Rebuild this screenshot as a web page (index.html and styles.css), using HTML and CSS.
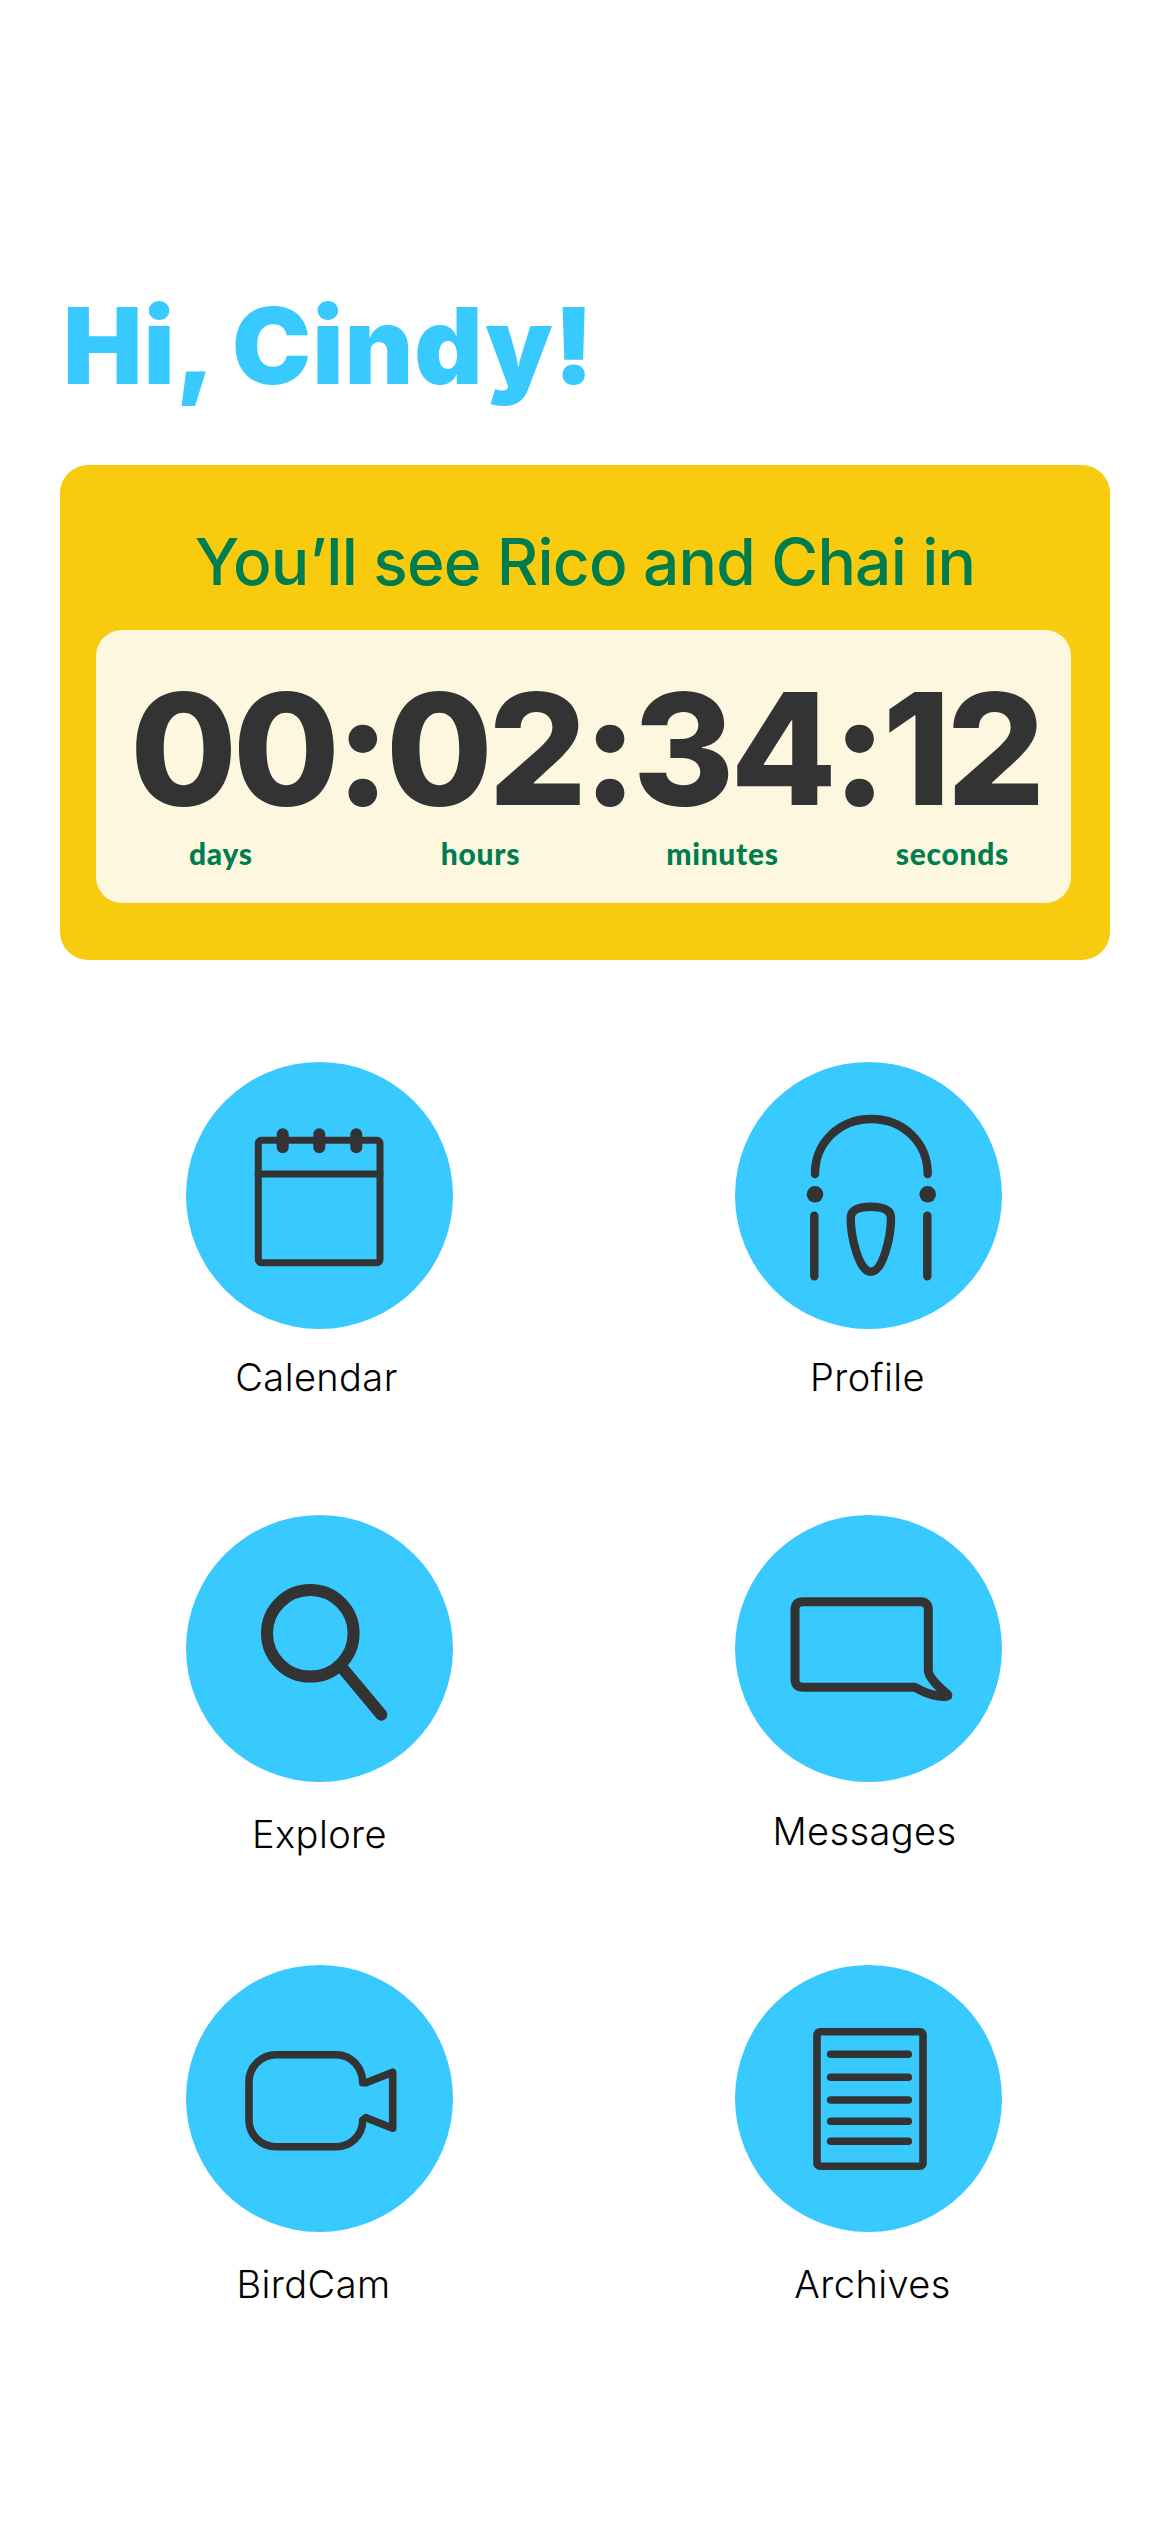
FILE: index.html
```html
<!DOCTYPE html>
<html lang="en">
<head>
<meta charset="utf-8">
<title>Hi, Cindy!</title>
<link rel="stylesheet" href="styles.css">
</head>
<body>
<main class="page">
  <h1 class="greeting">Hi, Cindy!</h1>
  <section class="card">
    <h2 class="card-title">You’ll see Rico and Chai in</h2>
    <div class="timer">
      <div class="digits">00:02:34:12</div>
      <div class="units">
        <span class="unit unit-days">days</span>
        <span class="unit unit-hours">hours</span>
        <span class="unit unit-minutes">minutes</span>
        <span class="unit unit-seconds">seconds</span>
      </div>
    </div>
  </section>
  <nav class="menu">
    <a class="item item-calendar">
      <span class="disc"><svg class="icon" viewBox="0 0 267 267"><rect x="72.3" y="78.3" width="121.7" height="122.4" rx="3"/><path d="M72 112H194"/><path class="thick" d="M96.7 72.3V85.3M133.3 72.3V85.3M170.3 72.3V85.3"/></svg></span>
      <span class="label">Calendar</span>
    </a>
    <a class="item item-profile">
      <span class="disc"><svg class="icon icon-profile" viewBox="0 0 267 267"><path d="M80 112C80 80 105 57 136.3 57S192.7 80 192.7 112"/><circle class="dot" cx="80" cy="132.3" r="8.3"/><circle class="dot" cx="192.7" cy="132.3" r="8.3"/><path d="M79.3 153.7V214.3M192.3 153.7V214.3"/><path d="M135.7 144.7C148 144.7 156 148 156 156C156 175 148 209.7 135.7 209.7C124 209.7 115.7 175 115.7 156C115.7 148 124 144.7 135.7 144.7Z"/></svg></span>
      <span class="label">Profile</span>
    </a>
    <a class="item item-explore">
      <span class="disc"><svg class="icon icon-bold" viewBox="0 0 267 267"><circle cx="124.3" cy="118.3" r="43.3"/><path d="M158 155L195.3 199.7"/></svg></span>
      <span class="label">Explore</span>
    </a>
    <a class="item item-messages">
      <span class="disc"><svg class="icon icon-msg" viewBox="0 0 267 267"><path d="M68 86.7H185.3Q193.3 86.7 193.3 94.7V155C193.3 163 205 173 212 179C214 181 212 181.5 210 181.5C200 181.5 190 178 180 172.3H68Q60 172.3 60 164.3V94.7Q60 86.7 68 86.7Z"/></svg></span>
      <span class="label">Messages</span>
    </a>
    <a class="item item-birdcam">
      <span class="disc"><svg class="icon icon-cam" viewBox="0 0 267 267"><path d="M90 89.7H150C165 89.7 176.7 102 176.7 117.7L180 117.7L206.7 107.3V163.3L180 152.7L176.7 155C176.7 170 165 181.7 150 181.7H90C75 181.7 63 170 63 155V116.7C63 102 75 89.7 90 89.7Z"/></svg></span>
      <span class="label">BirdCam</span>
    </a>
    <a class="item item-archives">
      <span class="disc"><svg class="icon icon-cam" viewBox="0 0 267 267"><rect x="82" y="66.7" width="106" height="134.6" rx="3"/><path d="M95.7 89.3H173.3M95.7 112.3H173.3M95.7 135H173.3M95.7 156.3H173.3M95.7 176.3H173.3"/></svg></span>
      <span class="label">Archives</span>
    </a>
  </nav>
</main>
</body>
</html>
```

FILE: styles.css
```css
* { box-sizing: border-box; }
html, body { margin: 0; background: #fff; }
.page { width: 1170px; height: 2532px; padding-top: 281px; overflow: hidden; }
.greeting {
  margin: 0 0 0 63px;
  font: 900 106px/130px Inter, sans-serif;
  letter-spacing: 0.9px;
  color: #38c9ff;
}
.card {
  width: 1050px;
  height: 495px;
  margin: 54px 0 0 60px;
  padding: 57px 36px 0;
  background: #f9cb0f;
  border-radius: 28px;
}
.card-title {
  margin: 0;
  height: 108px;
  font: 500 64px/80px Inter, sans-serif;
  letter-spacing: -0.8px;
  text-align: center;
  color: #007d4f;
}
.timer {
  width: 975px;
  height: 273px;
  padding: 59px 0 0 34px;
  background: #fef7e0;
  border-radius: 26px;
}
.digits {
  font: 800 155px/120px Inter, sans-serif;
  letter-spacing: -4.5px;
  color: #333;
  white-space: nowrap;
}
.units { display: flex; margin-top: 26px; padding-left: 59px; }
.unit { font: 900 30px/36px Lato, sans-serif; letter-spacing: 0.7px; color: #007d4f; }
.unit-hours { margin-left: 188px; }
.unit-minutes { margin-left: 146px; }
.unit-seconds { margin-left: 117px; }
.menu {
  display: grid;
  grid-template-columns: 267px 267px;
  column-gap: 282px;
  grid-auto-rows: 453px;
  margin: 102px 0 0 186px;
}
.item { display: flex; flex-direction: column; align-items: center; }
.disc { display: block; width: 267px; height: 267px; border-radius: 50%; background: #38c9ff; }
.icon { display: block; width: 267px; height: 267px; fill: none; stroke: #333; stroke-width: 7; stroke-linecap: round; stroke-linejoin: round; }
.thick { stroke-width: 12; }
.dot { fill: #333; stroke: none; }
.icon-bold { stroke-width: 12; }
.icon-msg { stroke-width: 9; }
.icon-profile { stroke-width: 8.4; }
.icon-cam { stroke-width: 7.6; }
.label { margin-top: 25px; font: 300 38px/46px Inter, sans-serif; letter-spacing: 0.4px; color: #000; white-space: nowrap; }
.item-calendar .label { margin-right: 6px; }
.item-profile .label { margin-right: 2px; }
.item-explore .label { margin-top: 29px; }
.item-messages .label { margin-right: 8px; margin-top: 26px; }
.item-birdcam .label { margin-right: 12px; margin-top: 29px; }
.item-archives .label { margin-left: 8px; margin-top: 29px; }
.item-birdcam, .item-archives { margin-top: -3px; }
```
